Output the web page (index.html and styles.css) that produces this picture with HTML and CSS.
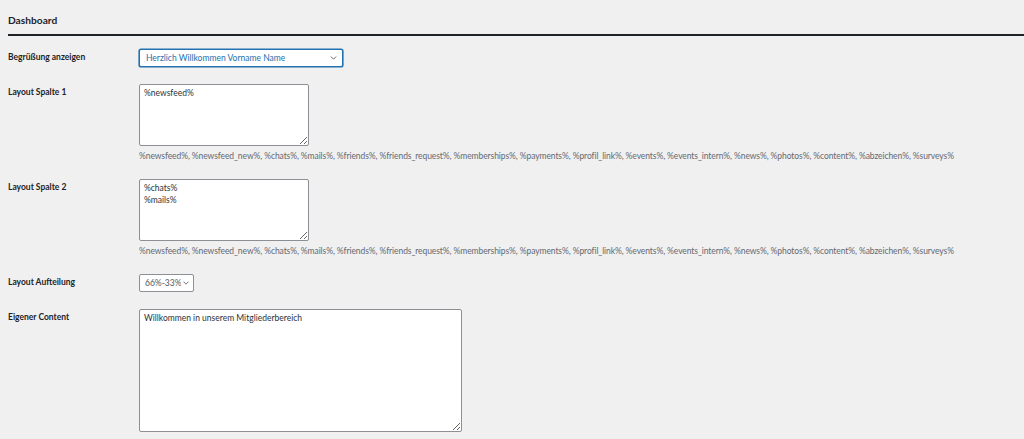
FILE: index.html
```html
<!DOCTYPE html>
<html lang="de">
<head>
<meta charset="utf-8">
<title>Dashboard</title>
<link rel="stylesheet" href="styles.css">
</head>
<body>
<div class="wrap">
  <h2 class="section-title">Dashboard</h2>
  <div class="form-table">
    <div class="row">
      <div class="label">Begrüßung anzeigen</div>
      <div class="field">
        <div class="select-wrap select-wide focused">
          <select class="select"><option>Herzlich Willkommen Vorname Name</option></select>
          <svg class="chev" viewBox="0 0 8 5" width="7" height="4"><path d="M0.7 0.7l3.3 3.3 3.3-3.3" fill="none" stroke="currentColor" stroke-width="1.1"/></svg>
        </div>
      </div>
    </div>
    <div class="row">
      <div class="label">Layout Spalte 1</div>
      <div class="field">
        <textarea class="textarea ta-small">%newsfeed%</textarea>
        <p class="desc">%newsfeed%, %newsfeed_new%, %chats%, %mails%, %friends%, %friends_request%, %memberships%, %payments%, %profil_link%, %events%, %events_intern%, %news%, %photos%, %content%, %abzeichen%, %surveys%</p>
      </div>
    </div>
    <div class="row">
      <div class="label">Layout Spalte 2</div>
      <div class="field">
        <textarea class="textarea ta-small">%chats%
%mails%</textarea>
        <p class="desc">%newsfeed%, %newsfeed_new%, %chats%, %mails%, %friends%, %friends_request%, %memberships%, %payments%, %profil_link%, %events%, %events_intern%, %news%, %photos%, %content%, %abzeichen%, %surveys%</p>
      </div>
    </div>
    <div class="row">
      <div class="label">Layout Aufteilung</div>
      <div class="field">
        <div class="select-wrap select-small">
          <select class="select"><option>66%-33%</option></select>
          <svg class="chev" viewBox="0 0 8 5" width="6" height="4"><path d="M0.7 0.7l3.3 3.3 3.3-3.3" fill="none" stroke="currentColor" stroke-width="1.1"/></svg>
        </div>
      </div>
    </div>
    <div class="row">
      <div class="label">Eigener Content</div>
      <div class="field">
        <textarea class="textarea ta-large">Willkommen in unserem Mitgliederbereich</textarea>
      </div>
    </div>
  </div>
</div>
</body>
</html>
```

FILE: styles.css
```css
html, body {
  margin: 0;
  padding: 0;
  background: #f0f0f1;
}
body {
  font-family: Lato, "Noto Sans", sans-serif;
  color: #1d2327;
  font-size: 8.5px;
}
.wrap {
  padding-left: 8px;
}
.section-title {
  margin: 0;
  padding-top: 13px;
  height: 21px;
  font-size: 10.2px;
  line-height: 14px;
  font-weight: 700;
  border-bottom: 2px solid #1d2327;
  box-sizing: content-box;
}
.form-table {
  display: flex;
  flex-direction: column;
  gap: 17px;
  padding-top: 13px;
}
.row {
  display: grid;
  grid-template-columns: 131px 1fr;
  align-items: start;
}
.label {
  font-weight: 700;
  line-height: 12px;
  padding-top: 2px;
}
.field {
  display: flex;
  flex-direction: column;
  align-items: flex-start;
}
.select-wrap {
  position: relative;
  height: 18px;
  box-sizing: border-box;
}
.select {
  appearance: none;
  -webkit-appearance: none;
  display: block;
  width: 100%;
  height: 18px;
  margin: 0;
  padding: 0 12px 0 6px;
  box-sizing: border-box;
  border: 1px solid #8c8f94;
  border-radius: 2px;
  background: #fff;
  font-family: inherit;
  font-size: 8.5px;
  color: #50575e;
  outline: none;
}
.select-wrap.focused .select {
  border-color: #2271b1;
  box-shadow: 0 0 0 0.6px #2271b1;
  color: #2271b1;
}
.chev {
  position: absolute;
  right: 6px;
  top: 7px;
  color: #50575e;
  pointer-events: none;
}
.select-small .chev {
  right: 5px;
  top: 7px;
}
.select-wide {
  width: 204px;
}
.select-small {
  width: 55px;
}
.select-small .select {
  padding-left: 5px;
}
.textarea {
  display: block;
  margin: 0;
  box-sizing: border-box;
  border: 1px solid #8c8f94;
  border-radius: 2px;
  background: #fff;
  font-family: inherit;
  font-size: 8.5px;
  line-height: 12px;
  color: #2c3338;
  padding: 2px 4px;
  outline: none;
}
.ta-small {
  width: 170px;
  height: 62px;
}
.ta-large {
  width: 323px;
  height: 123px;
}
.desc {
  margin: 4px 0 0;
  line-height: 12px;
  color: #646970;
  white-space: nowrap;
  letter-spacing: -0.08px;
}
```
